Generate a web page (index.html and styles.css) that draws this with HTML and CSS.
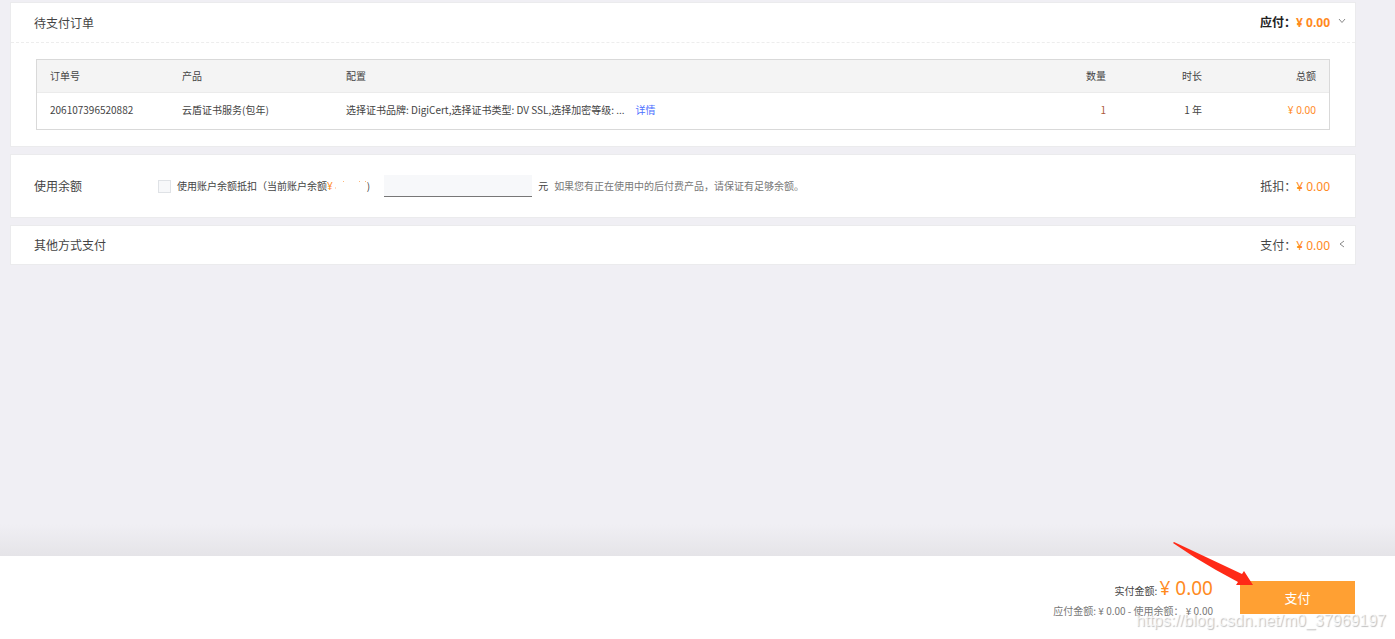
FILE: index.html
```html
<!DOCTYPE html>
<html lang="zh-CN">
<head>
  <meta charset="UTF-8">
  <title>支付</title>
  <link rel="stylesheet" href="styles.css">
</head>
<body>
  <main class="content">
    <section class="card">
      <div class="card-head dashed">
        <h2 class="card-title">待支付订单</h2>
        <div class="amount strong">应付：<span class="price">¥ 0.00</span></div>
        <button class="toggle" type="button" aria-label="收起">
          <svg width="8" height="8" viewBox="0 0 8 8"><path d="M1 2l3 3.5L7 2"/></svg>
        </button>
      </div>
      <div class="card-body">
        <table class="orders">
          <thead>
            <tr>
              <th class="col-id">订单号</th>
              <th class="col-product">产品</th>
              <th>配置</th>
              <th class="col-count right">数量</th>
              <th class="col-time right">时长</th>
              <th class="col-total right">总额</th>
            </tr>
          </thead>
          <tbody>
            <tr>
              <td>206107396520882</td>
              <td>云盾证书服务(包年)</td>
              <td>
                <div class="config">
                  <span class="config-text">选择证书品牌: DigiCert,选择证书类型: DV SSL,选择加密等级: ...</span>
                  <a class="detail" href="#">详情</a>
                </div>
              </td>
              <td class="right count">1</td>
              <td class="right">1 年</td>
              <td class="right price">¥ 0.00</td>
            </tr>
          </tbody>
        </table>
      </div>
    </section>

    <section class="card">
      <div class="card-head tall">
        <h2 class="card-title balance-title">使用余额</h2>
        <div class="balance">
          <input class="check" type="checkbox" id="use-balance">
          <label class="check-label" for="use-balance">使用账户余额抵扣（当前账户余额<span class="price">¥</span><svg class="masked" width="34" height="10" viewBox="0 0 34 10"><path d="M2 8h1M10 2l1-1M26 2l1-1M32 2l1-1"/></svg>)</label>
          <input class="money" type="text" id="money" aria-label="抵扣金额">
          <label class="unit" for="money">元</label>
          <span class="hint">如果您有正在使用中的后付费产品，请保证有足够余额。</span>
        </div>
        <div class="amount">抵扣：<span class="price">¥ 0.00</span></div>
      </div>
    </section>

    <section class="card">
      <div class="card-head">
        <h2 class="card-title">其他方式支付</h2>
        <div class="amount">支付：<span class="price">¥ 0.00</span></div>
        <button class="toggle" type="button" aria-label="展开">
          <svg width="8" height="8" viewBox="0 0 8 8"><path d="M6 1L2 4l4 3"/></svg>
        </button>
      </div>
    </section>
  </main>

  <footer class="pay-bar">
    <div class="summary">
      <div class="real">实付金额: <span class="total">¥ 0.00</span></div>
      <div class="formula">应付金额: ¥ 0.00 - 使用余额： ¥ 0.00</div>
    </div>
    <div class="pay">
      <button class="pay-button" type="button">支付</button>
      <svg class="arrow" width="80" height="46" viewBox="0 0 80 46"><path d="M0 1L1 0L69 32L71 29L80 43L63 43L65 40L43 28Q20 15 0 1Z"/></svg>
    </div>
    <div class="watermark">https://blog.csdn.net/m0_37969197</div>
  </footer>
</body>
</html>
```
FILE: styles.css
```css
* {
  box-sizing: border-box;
}
body {
  display: flex;
  flex-direction: column;
  min-height: 100vh;
  margin: 0;
  background: #f0eff4;
  color: #444;
  font-family: "Noto Sans CJK SC", sans-serif;
  font-size: 10px;
  line-height: 16px;
}
button, input {
  font-family: inherit;
  margin: 0;
}
.content {
  flex: 1;
  display: flex;
  flex-direction: column;
  gap: 7px;
  padding: 2px 39px 0 10px;
  background: linear-gradient(to top, #e5e4e8, #f0eff4 32px);
}
.card {
  background: #fff;
  border: 1px solid #ebebed;
}
.card-head {
  position: relative;
  display: flex;
  align-items: center;
  height: 38px;
  padding: 0 25px 0 23px;
}
.card-head.dashed {
  height: 40px;
  border-bottom: 1px dashed #ededed;
}
.card-head.tall {
  height: 62px;
}
.card-title {
  margin: 0;
  font-size: 12px;
  font-weight: normal;
}
.amount {
  margin-left: auto;
  font-size: 12px;
}
.strong {
  color: #222;
  font-weight: bold;
}
.price {
  color: #ff8a1e;
  font-family: "Noto Sans", sans-serif;
}
.toggle {
  position: absolute;
  top: 14px;
  right: 9px;
  display: flex;
  padding: 0;
  border: 0;
  background: none;
  cursor: pointer;
}
.toggle path {
  fill: none;
  stroke: #888;
}
.card-body {
  padding: 16px 25px;
}
.orders {
  width: 100%;
  table-layout: fixed;
  border-spacing: 0;
  border: 1px solid #d9d9d9;
}
.orders th {
  height: 33px;
  padding: 0 13px;
  background: #f4f4f4;
  border-bottom: 1px solid #ebebeb;
  font-weight: normal;
  text-align: left;
}
.orders td {
  height: 36px;
  padding: 0 13px 2px;
}
.orders .right {
  text-align: right;
}
.orders .count {
  color: #ad5a3c;
}
.col-id {
  width: 132px;
}
.col-product {
  width: 164px;
}
.col-count {
  width: 120px;
}
.col-time {
  width: 96px;
}
.col-total {
  width: 114px;
}
.config {
  display: flex;
  gap: 11px;
}
.config-text {
  white-space: nowrap;
}
.detail {
  color: #4d6fff;
  text-decoration: none;
}
.balance-title {
  width: 124px;
}
.balance {
  display: flex;
  align-items: center;
}
.check {
  appearance: none;
  width: 13px;
  height: 13px;
  margin-right: 6px;
  background: #f7f8fa;
  border: 1px solid #dfe2e6;
}
.masked {
  fill: none;
  stroke: #ffb87a;
}
.money {
  width: 148px;
  height: 22px;
  margin: 0 6px 0 14px;
  background: #f7f8fa;
  border: 0;
  border-bottom: 1px solid #777;
}
.unit {
  margin-right: 6px;
}
.hint {
  color: #777;
}
.pay-bar {
  position: relative;
  display: flex;
  justify-content: flex-end;
  gap: 27px;
  height: 83px;
  padding: 19px 40px 0 0;
  background: #fff;
}
.summary {
  text-align: right;
}
.real {
  line-height: 26px;
}
.total {
  font-family: "Noto Sans", sans-serif;
  font-size: 19px;
  color: #ff8a1e;
}
.formula {
  line-height: 14px;
  color: #777;
}
.pay {
  position: relative;
  padding-top: 6px;
}
.pay-button {
  width: 115px;
  height: 33px;
  border: 0;
  background: #ffa033;
  color: #fff;
  font-size: 13px;
  cursor: pointer;
}
.arrow {
  position: absolute;
  top: -33px;
  left: -67px;
  fill: #ff2a17;
}
.watermark {
  position: absolute;
  right: 9px;
  bottom: 9px;
  color: rgba(255, 255, 255, 0.7);
  font-family: "Liberation Sans", sans-serif;
  font-size: 16px;
  line-height: 18px;
  text-shadow: 1px 1px 1px rgba(0, 0, 0, 0.25);
}
```
